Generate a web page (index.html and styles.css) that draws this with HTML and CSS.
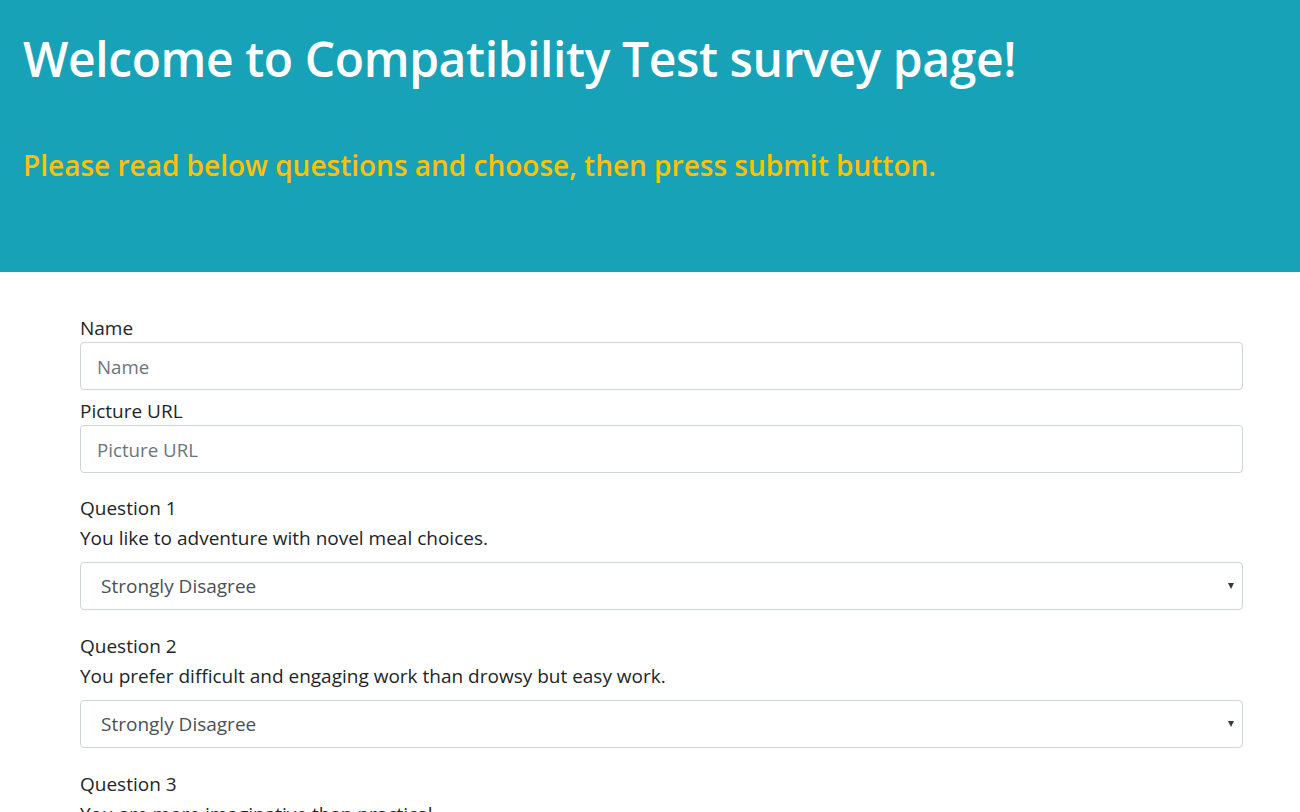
FILE: index.html
```html
<!DOCTYPE html>
<html lang="en">
<head>
<meta charset="utf-8">
<title>Compatibility Test</title>
<link rel="stylesheet" href="styles.css">
</head>
<body>
<header class="hero">
  <h1 class="hero-title">Welcome to Compatibility Test survey page!</h1>
  <h3 class="hero-sub">Please read below questions and choose, then press submit button.</h3>
</header>
<main class="survey">
  <form class="survey-form">
    <div class="field">
      <label class="field-label" for="name">Name</label>
      <input class="control" id="name" type="text" placeholder="Name">
    </div>
    <div class="field">
      <label class="field-label" for="pic">Picture URL</label>
      <input class="control" id="pic" type="text" placeholder="Picture URL">
    </div>
    <div class="question">
      <div class="q-title">Question 1</div>
      <div class="q-text">You like to adventure with novel meal choices.</div>
      <div class="select-wrap">
        <select class="control select"><option>Strongly Disagree</option><option>Disagree</option><option>Neutral</option><option>Agree</option><option>Strongly Agree</option></select>
        <span class="caret"></span>
      </div>
    </div>
    <div class="question">
      <div class="q-title">Question 2</div>
      <div class="q-text">You prefer difficult and engaging work than drowsy but easy work.</div>
      <div class="select-wrap">
        <select class="control select"><option>Strongly Disagree</option><option>Disagree</option><option>Neutral</option><option>Agree</option><option>Strongly Agree</option></select>
        <span class="caret"></span>
      </div>
    </div>
    <div class="question">
      <div class="q-title">Question 3</div>
      <div class="q-text">You are more imaginative than practical.</div>
      <div class="select-wrap">
        <select class="control select"><option>Strongly Disagree</option><option>Disagree</option><option>Neutral</option><option>Agree</option><option>Strongly Agree</option></select>
        <span class="caret"></span>
      </div>
    </div>
  </form>
</main>
</body>
</html>
```

FILE: styles.css
```css
* { box-sizing: border-box; }
html, body { margin: 0; padding: 0; }
body {
  font-family: "Open Sans", "Noto Sans", "Liberation Sans", sans-serif;
  color: #212529;
  background: #fff;
  overflow: hidden;
}
.hero {
  background: #17a2b8;
  height: 272px;
  padding: 23px 23px 0;
}
.hero-title {
  margin: 0;
  color: #fff;
  font-size: 48px;
  font-weight: 600;
  line-height: 72px;
  letter-spacing: -0.4px;
}
.hero-sub {
  margin: 50px 0 0;
  color: #ffc107;
  font-size: 28px;
  font-weight: 600;
  line-height: 40px;
}
.survey {
  padding: 43px 57px 0 80px;
}
.field { margin-bottom: 8px; }
.field-label {
  display: block;
  font-size: 19px;
  line-height: 27px;
}
.control {
  display: block;
  width: 100%;
  height: 48px;
  padding: 0 16px;
  font-family: inherit;
  font-size: 18.7px;
  color: #495057;
  background: #fff;
  border: 1px solid #ced4da;
  border-radius: 4px;
  outline: none;
}
.control::placeholder { color: #6c757d; }
.question { padding-top: 14px; margin-bottom: 9px; }
.q-title, .q-text {
  font-size: 19px;
  line-height: 27px;
}
.q-text { margin-top: 3px; margin-bottom: 10px; }
.select-wrap { position: relative; }
.select {
  -webkit-appearance: none;
  appearance: none;
  padding-left: 20px;
  font-size: 19px;
}
.caret {
  position: absolute;
  right: 9px;
  top: 21px;
  width: 0;
  height: 0;
  border-left: 3.5px solid transparent;
  border-right: 3.5px solid transparent;
  border-top: 6px solid #343a40;
}
```
